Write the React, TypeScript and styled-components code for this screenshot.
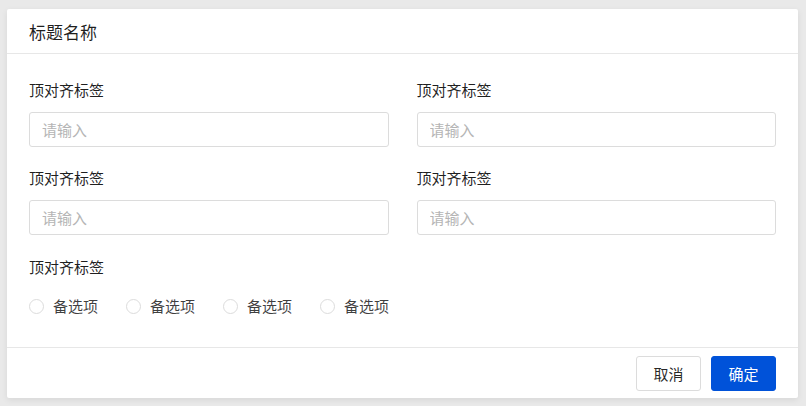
import styled, { createGlobalStyle } from "styled-components"

const GlobalStyle = createGlobalStyle`
    html, body {
        margin: 0;
        padding: 0;
        background: #e9e9e9;
        font-family: "Noto Sans CJK SC", "Noto Sans", sans-serif;
    }
`

const Page = styled.div`
    width: 806px;
    height: 406px;
    padding: 9px 8px 8px 7px;
    box-sizing: border-box;
`

const Dialog = styled.div`
    width: 791px;
    height: 389px;
    background: #fff;
    border-radius: 2px;
    box-shadow: 0 2px 6px rgba(0, 0, 0, 0.08);
    display: flex;
    flex-direction: column;
`

const Header = styled.div`
    height: 45px;
    padding: 0 22px;
    display: flex;
    align-items: center;
    border-bottom: 1px solid #e7e7e7;
    font-size: 17px;
    color: rgba(0, 0, 0, 0.88);
    box-sizing: border-box;
`

const Body = styled.div`
    flex: 1;
    padding: 26px 22px 0 22px;
`

const Grid = styled.div`
    display: grid;
    grid-template-columns: 1fr 1fr;
    column-gap: 28px;
    row-gap: 21px;
`

const Field = styled.div`
    display: flex;
    flex-direction: column;
`

const Label = styled.div<{ $gap?: number }>`
    font-size: 15px;
    line-height: 20px;
    color: rgba(0, 0, 0, 0.88);
    margin-bottom: ${(p) => p.$gap ?? 12}px;
`

const Input = styled.input`
    height: 35px;
    border: 1px solid #dcdcdc;
    border-radius: 3px;
    padding: 0 12px;
    font-family: inherit;
    font-size: 15px;
    box-sizing: border-box;
    outline: none;
    &::placeholder {
        color: #b5b5b5;
    }
`

const RadioSection = styled.div`
    margin-top: 22px;
`

const RadioGroup = styled.div`
    display: flex;
    gap: 28px;
`

const Radio = styled.label`
    display: flex;
    align-items: center;
    gap: 9px;
    font-size: 15px;
    line-height: 22px;
    color: rgba(0, 0, 0, 0.75);
`

const Circle = styled.span`
    width: 15px;
    height: 15px;
    border-radius: 50%;
    border: 1px solid #dcdcdc;
    box-sizing: border-box;
`

const Footer = styled.div`
    height: 51px;
    border-top: 1px solid #e7e7e7;
    display: flex;
    align-items: center;
    justify-content: flex-end;
    gap: 10px;
    padding: 0 22px;
    box-sizing: border-box;
`

const Button = styled.button<{ $primary?: boolean }>`
    height: 35px;
    width: 65px;
    border-radius: 3px;
    font-family: inherit;
    font-size: 15px;
    border: 1px solid ${(p) => (p.$primary ? "#0052d9" : "#dcdcdc")};
    background: ${(p) => (p.$primary ? "#0052d9" : "#fff")};
    color: ${(p) => (p.$primary ? "#fff" : "rgba(0,0,0,0.85)")};
`

const options = ["备选项", "备选项", "备选项", "备选项"]

export default function App() {
    return (
        <>
            <GlobalStyle />
            <Page>
                <Dialog>
                    <Header>标题名称</Header>
                    <Body>
                        <Grid>
                            {[0, 1, 2, 3].map((i) => (
                                <Field key={i}>
                                    <Label>顶对齐标签</Label>
                                    <Input placeholder="请输入" />
                                </Field>
                            ))}
                        </Grid>
                        <RadioSection>
                            <Label $gap={18}>顶对齐标签</Label>
                            <RadioGroup>
                                {options.map((o, i) => (
                                    <Radio key={i}>
                                        <Circle />
                                        {o}
                                    </Radio>
                                ))}
                            </RadioGroup>
                        </RadioSection>
                    </Body>
                    <Footer>
                        <Button>取消</Button>
                        <Button $primary>确定</Button>
                    </Footer>
                </Dialog>
            </Page>
        </>
    )
}
